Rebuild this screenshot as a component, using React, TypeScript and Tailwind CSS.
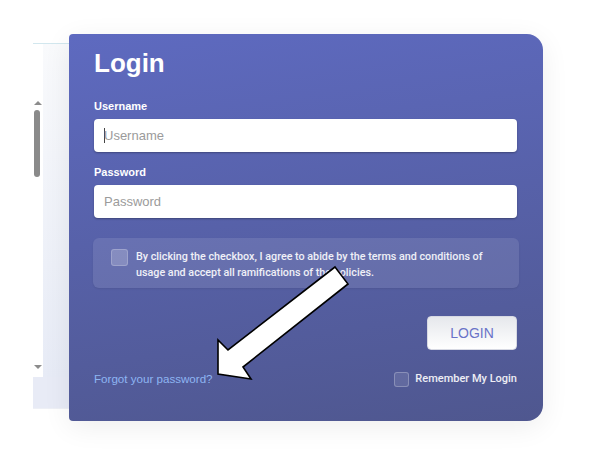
import * as React from "react";

// 左侧被遮住的面板（只露出滚动条一角）
const SidePanel = () => (
  <div className="mt-[9px] w-[36px] h-[366px] flex flex-col border-t border-[#d2e7ee]">
    <div className="flex flex-1">
      <div className="w-[10px] bg-white flex flex-col items-center">
        <div className="mt-[57px] w-0 h-0 border-l-[4px] border-r-[4px] border-b-[4px] border-l-transparent border-r-transparent border-b-[#8c8c8c]" />
        <div className="mt-[5px] ml-[-3px] w-[6px] h-[67px] rounded-full bg-[#8a8a8a]" />
        <div className="mt-auto mb-[8px] w-0 h-0 border-l-[4px] border-r-[4px] border-t-[4px] border-l-transparent border-r-transparent border-t-[#8c8c8c]" />
      </div>
      <div className="flex-1 bg-linear-to-b from-[#f9fafc] to-[#e7ebf6]" />
    </div>
    <div className="h-[32px] bg-[#e8ebf6] border-b border-[#eef0f6]" />
  </div>
);

const Field = ({label, placeholder, caret}: {label: string; placeholder: string; caret?: boolean}) => (
  <>
    <label className="text-[11px] leading-[13px] font-bold text-white">{label}</label>
    <div className="mt-[6px] mr-[1px] h-[33px] rounded-[4px] bg-white shadow-[0_1px_2px_rgba(0,0,0,0.3)] flex items-center pl-[10px]">
      {caret && <span className="w-px h-[15px] bg-[#444] mr-[-1px]" />}
      <span className="text-[13px] text-[#9b9b9b]">{placeholder}</span>
    </div>
  </>
);

export default function App() {
  return (
    <div className="relative w-[599px] h-[464px] bg-white overflow-hidden font-['Liberation_Sans',Arial,sans-serif]">
      <div className="flex items-start pt-[34px] pl-[33px]">
        <SidePanel />

        {/* 登录卡片 */}
        <div className="w-[474px] h-[387px] px-[25px] pt-[14px] flex flex-col rounded-l-[4px] rounded-r-[16px] bg-linear-[172deg] from-[#5e6ac0] to-[#4f578f] shadow-[0_6px_28px_rgba(0,0,0,0.07)]">
          <h1 className="text-[26px] leading-[30px] font-bold text-white">Login</h1>

          <div className="mt-[22px] flex flex-col">
            <Field label="Username" placeholder="Username" caret />
          </div>
          <div className="mt-[14px] flex flex-col">
            <Field label="Password" placeholder="Password" />
          </div>

          {/* 条款勾选 */}
          <div className="mt-[20px] mx-[-1px] h-[50px] rounded-[6px] bg-white/10 shadow-[0_1px_2px_rgba(0,0,0,0.08)] flex items-start pl-[18px] pt-[11px]">
            <div className="w-[17px] h-[17px] shrink-0 rounded-[3px] bg-white/20 border border-white/20" />
            <p className="ml-[8px] text-[10.75px] leading-[16px] font-medium text-white/90 font-['Roboto',sans-serif]">
              By clicking the checkbox, I agree to abide by the terms and conditions of
              <br />
              usage and accept all ramifications of the policies.
            </p>
          </div>

          <button className="mt-[28px] mr-[1px] self-end w-[90px] h-[34px] rounded-[4px] bg-linear-to-b from-[#e6e8ec] to-white border border-[#d7d9e3] text-[14px] text-[#6a73c8]">
            LOGIN
          </button>

          <div className="mt-[21px] mr-[1px] flex items-center justify-between">
            <a className="text-[11.6px] leading-[16px] text-[#8eb5f2]">Forgot your password?</a>
            <div className="flex items-center">
              <div className="w-[15px] h-[15px] rounded-[3px] bg-white/10 border border-white/25" />
              <span className="ml-[6px] text-[11px] leading-[16px] font-medium text-white/90 font-['Roboto',sans-serif]">Remember My Login</span>
            </div>
          </div>
        </div>
      </div>

      {/* 标注箭头 */}
      <svg className="absolute inset-0 pointer-events-none" width="599" height="464" viewBox="0 0 599 464">
        <polygon
          points="335,267 348,284 243,367 251,379 218,374 218,340 228,350"
          fill="#ffffff"
          stroke="#000000"
          strokeWidth="1.6"
          strokeLinejoin="miter"
        />
      </svg>
    </div>
  );
}
